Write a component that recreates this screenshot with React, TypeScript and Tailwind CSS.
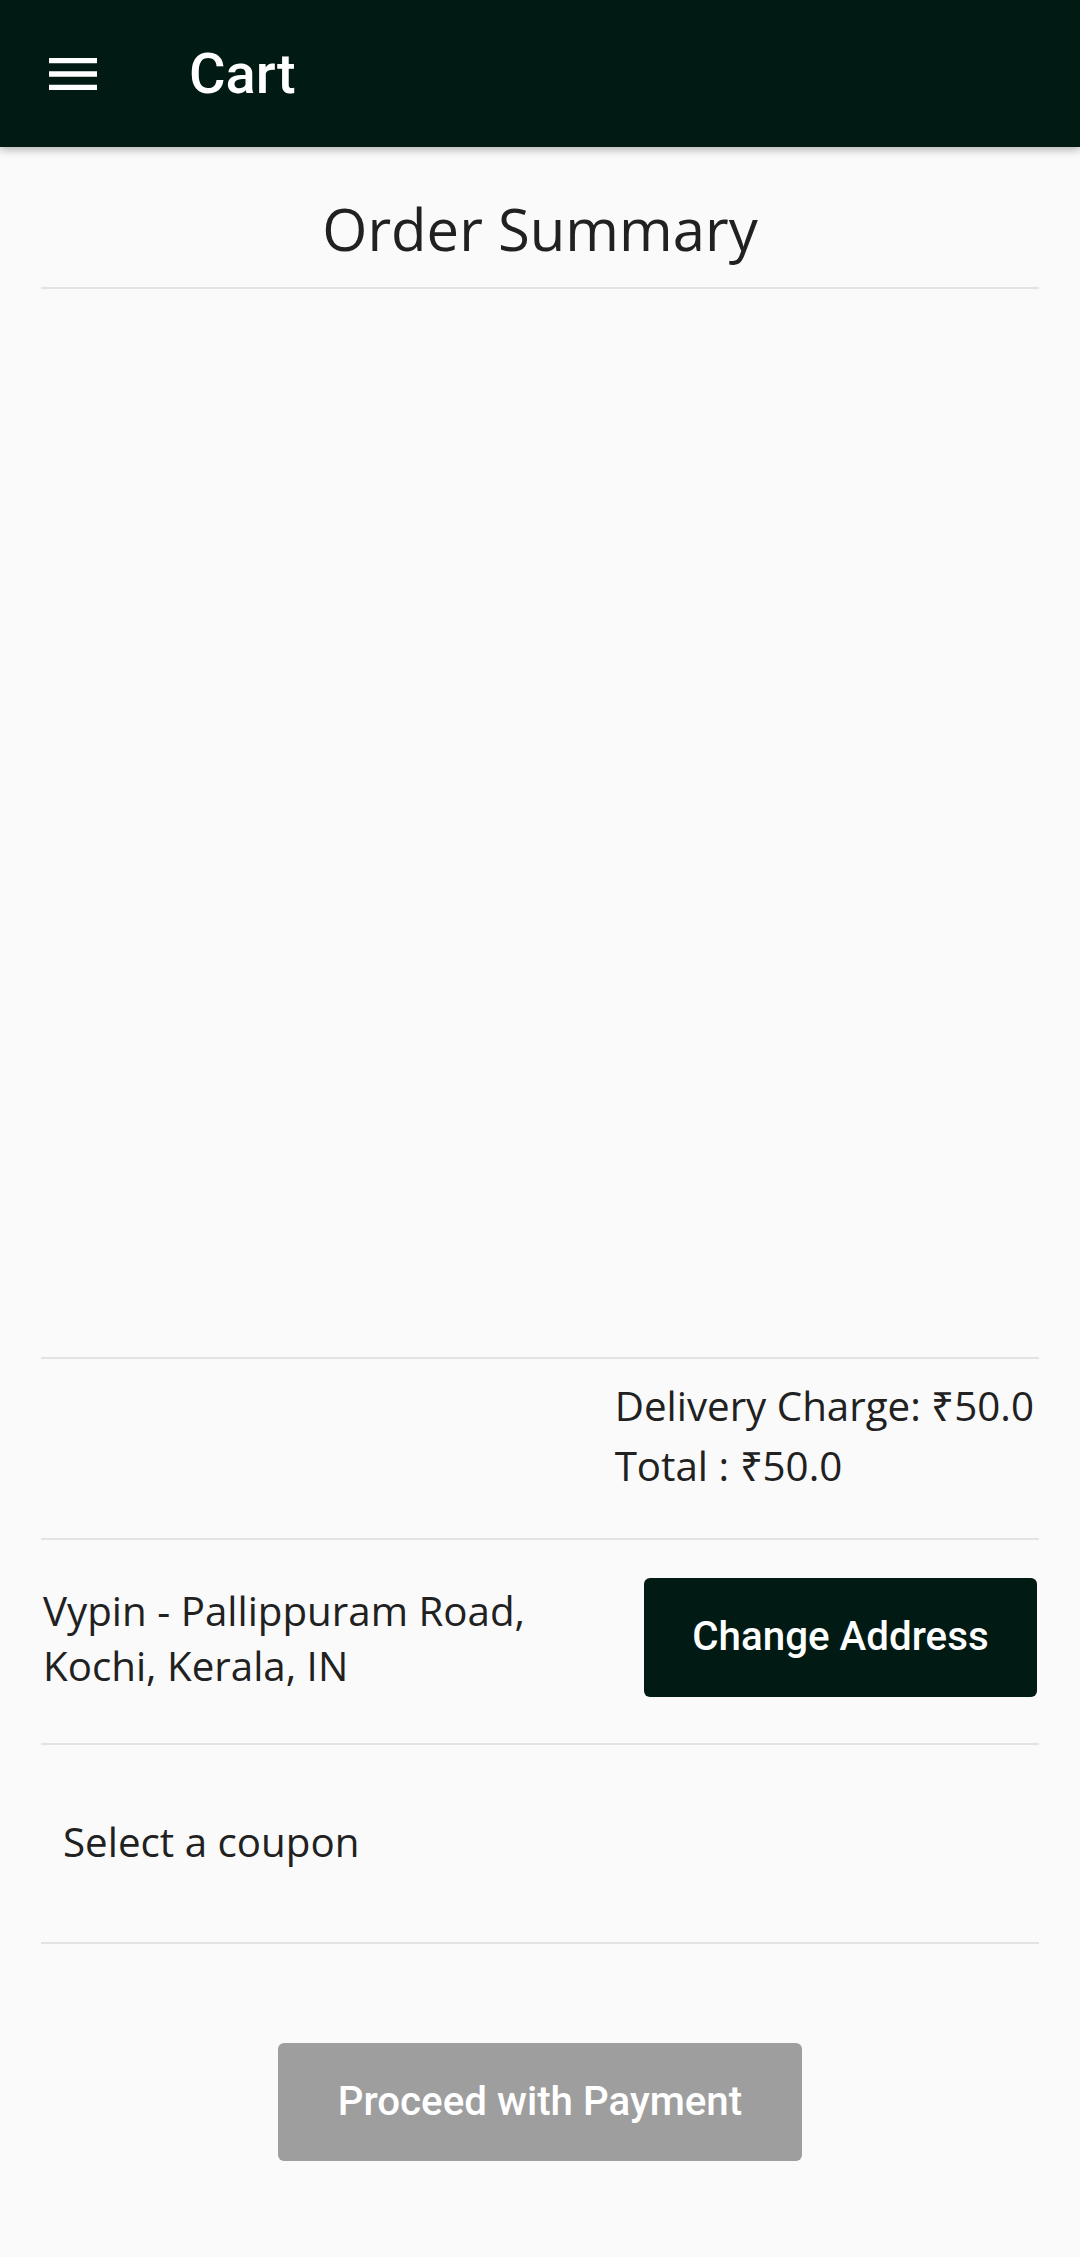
import React from 'react';

const Divider = () => <div className="h-[2px] bg-[#e3e3e3]" />;

const MenuIcon = () => (
  <svg viewBox="0 0 24 24" className="w-[64px] h-[64px]" fill="#ffffff">
    <path d="M3 18h18v-2H3v2zm0-5h18v-2H3v2zm0-7v2h18V6H3z" />
  </svg>
);

const App = () => (
  <div className="min-h-screen bg-[#fafafa] font-['Open_Sans',sans-serif] text-[#212121]">

    {/* ── Toolbar ── */}
    <header className="relative z-10 h-[147px] bg-[#011a14] flex items-center shadow-[0_3px_8px_rgba(0,0,0,0.28)]">
      <button className="ml-[41px] w-[64px] h-[64px] flex items-center justify-center">
        <MenuIcon />
      </button>
      <h1 className="ml-[84px] text-white font-['Roboto',sans-serif] font-medium text-[56px] leading-none">Cart</h1>
    </header>

    <main className="px-[41px]">
      <h2 className="pt-[41px] pb-[17px] text-center text-[58px] leading-[82px]">Order Summary</h2>
      <Divider />

      {/* cart items (empty) */}
      <div className="h-[1068px]" />
      <Divider />

      {/* ── Totals ── */}
      <div className="flex justify-end pt-[17px] pb-[42px] pr-[5px]">
        <div className="text-[40.3px] leading-[60px]">
          <p>Delivery Charge: ₹50.0</p>
          <p>Total : ₹50.0</p>
        </div>
      </div>
      <Divider />

      {/* ── Address ── */}
      <div className="flex items-center justify-between pt-[38px] pb-[46px] pl-[2px] pr-[2px]">
        <p className="w-[530px] text-[40.3px] leading-[55px]">Vypin - Pallippuram Road, Kochi, Kerala, IN</p>
        <button className="h-[119px] w-[393px] rounded-[6px] bg-[#011a14] text-white font-['Roboto',sans-serif] font-medium text-[40.3px]">
          Change Address
        </button>
      </div>
      <Divider />

      {/* ── Coupon ── */}
      <div className="pt-[69px] pb-[73px] pl-[22px]">
        <p className="text-[40.3px] leading-[55px]">Select a coupon</p>
      </div>
      <Divider />

      {/* ── Pay ── */}
      <div className="flex justify-center pt-[99px]">
        <button className="h-[118px] w-[524px] rounded-[6px] bg-[#9e9e9e] text-white font-['Roboto',sans-serif] font-medium text-[40.3px]">
          Proceed with Payment
        </button>
      </div>
    </main>
  </div>
);

export default App;
